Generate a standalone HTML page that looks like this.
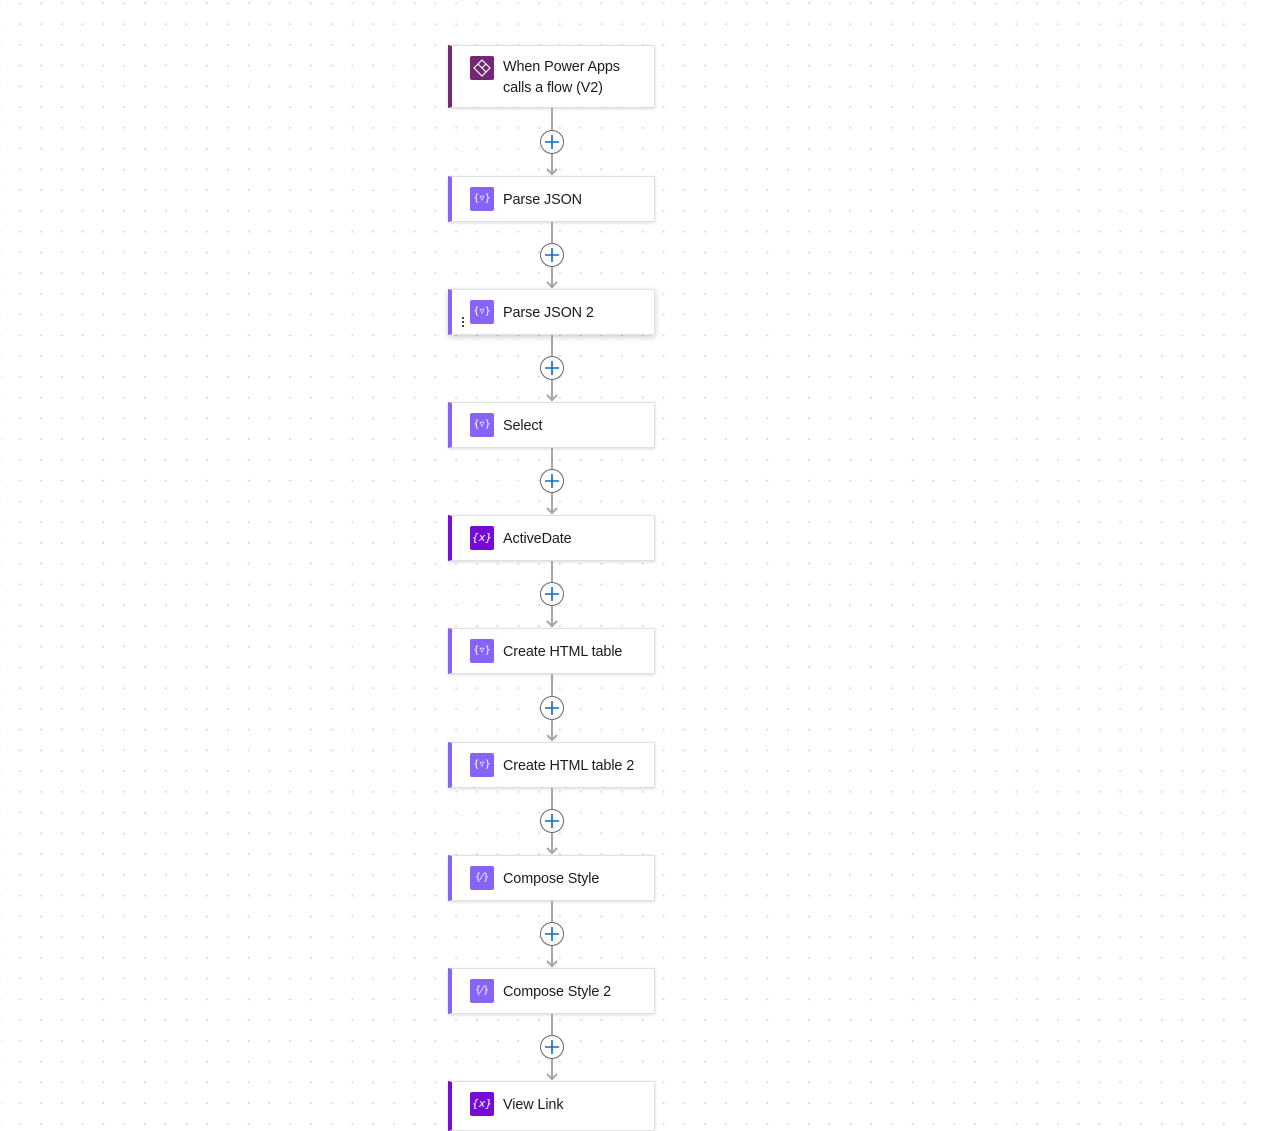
<!DOCTYPE html>
<html><head><meta charset="utf-8"><style>
html,body{margin:0;padding:0}
body{width:1261px;height:1126px;overflow:hidden;position:relative;background:#fff;
background-image:radial-gradient(circle,#cccccc 0.7px,transparent 1px);
background-size:20.75px 20.75px;background-position:10px -7px;
font-family:"Segoe UI","Liberation Sans",sans-serif;}
.card{position:absolute;left:448px;width:207px;background:#fff;box-sizing:border-box;
border:1px solid #e0e0e0;border-left:4px solid #8764f8;box-shadow:0 1px 3px rgba(0,0,0,.15);}
.ic{position:absolute;left:18px;top:10px;width:24px;height:24px;border-radius:2px;background:#8764f8;
color:#fff;font-size:10px;line-height:24px;text-align:center;font-family:"DejaVu Sans",sans-serif}
.t{position:absolute;left:51px;top:13px;font-size:14.4px;color:#1b1b1b;line-height:21px;letter-spacing:-0.1px}
.v{border-left-color:#770bd6}.v .ic{background:#770bd6;font-style:italic;font-size:11px}
svg.c{position:absolute;left:536px;}
</style></head><body>

<div class="card" style="top:45px;height:63px;border-left-color:#742774">
 <div class="ic" style="background:#742774;top:10px"><svg width="24" height="24" viewBox="0 0 24 24"><g fill="none" stroke="#fff" stroke-width="1.2"><path d="M12 4 L20 12 L12 20 L4 12 Z"/><path d="M8 8 L16 16 M12 12 L16 8"/></g></svg></div>
 <div class="t" style="top:11px">When Power Apps<br>calls a flow (V2)</div>
</div>

<div class="card" style="top:176px;height:46px"><div class="ic">{▿}</div><div class="t">Parse JSON</div></div>
<div class="card" style="top:289px;height:46px;box-shadow:0 2px 6px rgba(0,0,0,.2)"><div class="ic">{▿}</div><div class="t">Parse JSON 2</div>
 <div style="position:absolute;left:10px;top:27px;width:2px;height:2px;background:#444;box-shadow:0 4px 0 #444,0 8px 0 #444"></div></div>
<div class="card" style="top:402px;height:46px"><div class="ic">{▿}</div><div class="t">Select</div></div>
<div class="card v" style="top:515px;height:46px"><div class="ic">{x}</div><div class="t">ActiveDate</div></div>
<div class="card" style="top:628px;height:46px"><div class="ic">{▿}</div><div class="t">Create HTML table</div></div>
<div class="card" style="top:742px;height:46px"><div class="ic">{▿}</div><div class="t">Create HTML table 2</div></div>
<div class="card" style="top:855px;height:46px"><div class="ic">{⁄}</div><div class="t">Compose Style</div></div>
<div class="card" style="top:968px;height:46px"><div class="ic">{⁄}</div><div class="t">Compose Style 2</div></div>
<div class="card v" style="top:1081px;height:50px"><div class="ic">{x}</div><div class="t">View Link</div></div>

<svg class="c" style="top:108px" width="32" height="68"><g stroke="#a6a6a6" stroke-width="2" fill="none"><path d="M16 0V22M16 46V67M11 61L16 66L21 61"/></g><circle cx="16" cy="34" r="11.5" fill="#fff" stroke="#666" stroke-width="1"/><path d="M16 27V41M9 34H23" stroke="#0f6cbd" stroke-width="1.6"/></svg>
<svg class="c" style="top:222px" width="32" height="67"><g stroke="#a6a6a6" stroke-width="2" fill="none"><path d="M16 0V21M16 45V66M11 60L16 65L21 60"/></g><circle cx="16" cy="33" r="11.5" fill="#fff" stroke="#666" stroke-width="1"/><path d="M16 26V40M9 33H23" stroke="#0f6cbd" stroke-width="1.6"/></svg>
<svg class="c" style="top:335px" width="32" height="67"><g stroke="#a6a6a6" stroke-width="2" fill="none"><path d="M16 0V21M16 45V66M11 60L16 65L21 60"/></g><circle cx="16" cy="33" r="11.5" fill="#fff" stroke="#666" stroke-width="1"/><path d="M16 26V40M9 33H23" stroke="#0f6cbd" stroke-width="1.6"/></svg>
<svg class="c" style="top:448px" width="32" height="67"><g stroke="#a6a6a6" stroke-width="2" fill="none"><path d="M16 0V21M16 45V66M11 60L16 65L21 60"/></g><circle cx="16" cy="33" r="11.5" fill="#fff" stroke="#666" stroke-width="1"/><path d="M16 26V40M9 33H23" stroke="#0f6cbd" stroke-width="1.6"/></svg>
<svg class="c" style="top:561px" width="32" height="67"><g stroke="#a6a6a6" stroke-width="2" fill="none"><path d="M16 0V21M16 45V66M11 60L16 65L21 60"/></g><circle cx="16" cy="33" r="11.5" fill="#fff" stroke="#666" stroke-width="1"/><path d="M16 26V40M9 33H23" stroke="#0f6cbd" stroke-width="1.6"/></svg>
<svg class="c" style="top:674px" width="32" height="68"><g stroke="#a6a6a6" stroke-width="2" fill="none"><path d="M16 0V22M16 46V67M11 61L16 66L21 61"/></g><circle cx="16" cy="34" r="11.5" fill="#fff" stroke="#666" stroke-width="1"/><path d="M16 27V41M9 34H23" stroke="#0f6cbd" stroke-width="1.6"/></svg>
<svg class="c" style="top:788px" width="32" height="67"><g stroke="#a6a6a6" stroke-width="2" fill="none"><path d="M16 0V21M16 45V66M11 60L16 65L21 60"/></g><circle cx="16" cy="33" r="11.5" fill="#fff" stroke="#666" stroke-width="1"/><path d="M16 26V40M9 33H23" stroke="#0f6cbd" stroke-width="1.6"/></svg>
<svg class="c" style="top:901px" width="32" height="67"><g stroke="#a6a6a6" stroke-width="2" fill="none"><path d="M16 0V21M16 45V66M11 60L16 65L21 60"/></g><circle cx="16" cy="33" r="11.5" fill="#fff" stroke="#666" stroke-width="1"/><path d="M16 26V40M9 33H23" stroke="#0f6cbd" stroke-width="1.6"/></svg>
<svg class="c" style="top:1014px" width="32" height="67"><g stroke="#a6a6a6" stroke-width="2" fill="none"><path d="M16 0V21M16 45V66M11 60L16 65L21 60"/></g><circle cx="16" cy="33" r="11.5" fill="#fff" stroke="#666" stroke-width="1"/><path d="M16 26V40M9 33H23" stroke="#0f6cbd" stroke-width="1.6"/></svg>
</body></html>
